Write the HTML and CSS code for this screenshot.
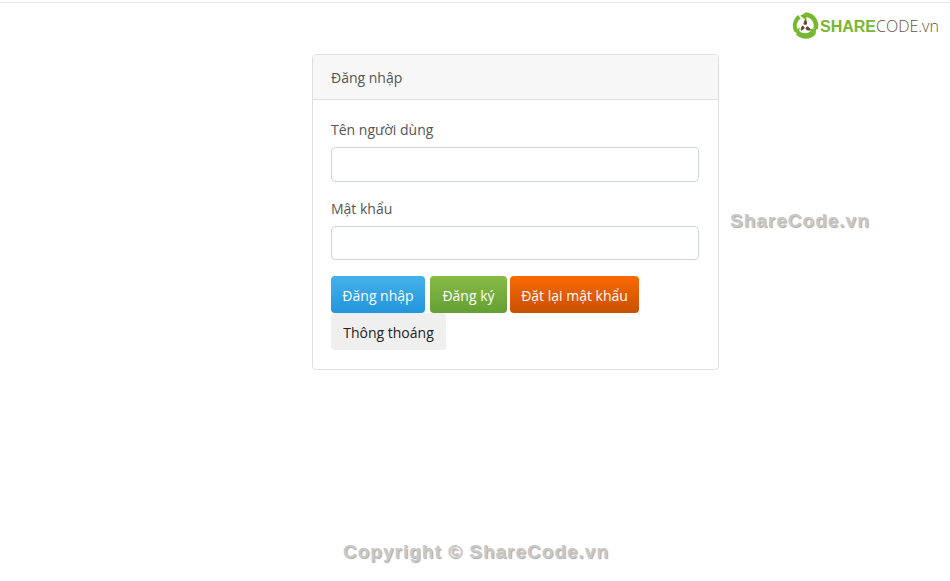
FILE: index.html
```html
<!DOCTYPE html>
<html lang="vi">
<head>
  <meta charset="UTF-8">
  <meta name="viewport" content="width=device-width, initial-scale=1.0">
  <title>Đăng nhập</title>
  <link rel="stylesheet" href="styles.css">
</head>
<body>
  <div class="top-line"></div>

  <!-- Logo watermark -->
  <div class="logo">
    <svg class="logo-icon" width="27" height="27" viewBox="0 0 28 28">
      <path d="M15 .5a13.500 13.500 0 0 1 11.500 18l-4.500-1.700a8.800 8.800 0 0 0-7-11.500V9L8.500 4 15 0z" fill="#76b82f"/>
      <path d="M24.500 23A13.500 13.500 0 0 1 4 23l3.200-3.500a8.800 8.800 0 0 0 12.500 0l-2.200-2 7.500-.5-.5 6.500z" fill="#76b82f"/>
      <path d="M2.500 20.500A13.500 13.500 0 0 1 6.500 3l2.500 3.800a8.800 8.800 0 0 0-3.500 10.700l2.500-1.500-1 7z" fill="#76b82f"/>
      <path d="M14 7.500c1.800 2.200 2.100 4 1.200 5.700-1.500 0-2.800-.1-3.400-.6.200-1.900 1-3.600 2.200-5.100zM9.500 19.500c-.9-2.500-.3-4.400 1.700-5.600 1.100.9 2 1.900 2 2.800-1.100 1.400-2.300 2.400-3.700 2.800zM19.500 19c-2.600.6-4.400.1-5.600-1.700.6-1.300 1.300-2.300 2.200-2.500 1.600.7 2.700 2.300 3.400 4.200z" fill="#6b4a2f"/>
    </svg>
    <span class="logo-text"><b>SHARE</b>CODE.vn</span>
  </div>

  <div class="card">
    <div class="card-header">Đăng nhập</div>
    <form class="card-body">
      <div class="form-group">
        <label for="username">Tên người dùng</label>
        <input class="form-control" id="username" type="text">
      </div>
      <div class="form-group">
        <label for="password">Mật khẩu</label>
        <input class="form-control" id="password" type="password">
      </div>
      <div class="actions">
        <button class="btn btn-blue" type="submit">Đăng nhập</button>
        <button class="btn btn-green" type="button">Đăng ký</button>
        <button class="btn btn-orange" type="button">Đặt lại mật khẩu</button>
        <button class="btn btn-plain" type="button">Thông thoáng</button>
      </div>
    </form>
  </div>

  <!-- Watermarks on top of the page -->
  <div class="mark mark-side">ShareCode.vn</div>
  <div class="mark mark-bottom">Copyright © ShareCode.vn</div>
</body>
</html>
```

FILE: styles.css
```css
/* Reset and base styles */
* {
  margin: 0;
  padding: 0;
  box-sizing: border-box;
}
body {
  position: relative;
  height: 581px;
  overflow: hidden;
  background: #fff;
  color: #212529;
  font-family: 'Open Sans', sans-serif;
  font-size: 14px;
}
.top-line {
  height: 3px;
  border-bottom: 1px solid #e6e6e6;
}

/* Card */
.card {
  width: 407px;
  margin: 51px 0 0 312px;
  border: 1px solid #dfdfdf;
  border-radius: 4px;
}
.card-header {
  height: 45px;
  padding: 0 18px;
  line-height: 45px;
  color: #555;
  background: #f7f7f7;
  border-bottom: 1px solid #dfdfdf;
  border-radius: 3px 3px 0 0;
}
.card-body {
  padding: 19px 18px 19px;
}

/* Form */
.form-group {
  margin-bottom: 16px;
}
.form-group label {
  display: block;
  height: 28px;
  line-height: 21px;
  color: #555;
}
.form-control {
  display: block;
  width: 368px;
  height: 34.5px;
  border: 1px solid #ced4da;
  border-radius: 4px;
  background: #fff;
}

/* Buttons */
.actions {
  display: flex;
  flex-wrap: wrap;
  column-gap: 5px;
}
.btn {
  height: 37px;
  padding-top: 2px;
  border: none;
  border-radius: 4px;
  color: #fff;
  font-family: inherit;
  font-size: 14px;
}
.btn-blue {
  width: 94px;
  background: linear-gradient(#45b1ea, #2195dc);
}
.btn-green {
  width: 77px;
  background: linear-gradient(#86bb45, #659f35);
}
.btn-orange {
  width: 129px;
  margin-left: -2px;
  background: linear-gradient(#f96a05, #c94f02);
}
.btn-plain {
  width: 115px;
  color: #222;
  background: #efefef;
}

/* Logo */
.logo {
  position: absolute;
  top: 12px;
  left: 792px;
  display: flex;
  align-items: center;
  gap: 1px;
}
.logo-text {
  color: #6b5138;
  font-family: 'Open Sans', sans-serif;
  font-weight: 300;
  font-size: 16px;
}
.logo-text b {
  color: #76b82f;
  font-family: 'Liberation Sans', sans-serif;
  font-weight: bold;
  font-size: 16px;
}

/* Watermarks */
.mark {
  position: absolute;
  color: #c8c8c8;
  font-family: 'Liberation Sans', sans-serif;
  font-weight: bold;
  font-size: 19px;
  letter-spacing: 1px;
  text-shadow: 1px 1px 1px #aaa;
}
.mark-side {
  top: 210px;
  left: 730px;
}
.mark-bottom {
  top: 541px;
  left: 343px;
}
```
